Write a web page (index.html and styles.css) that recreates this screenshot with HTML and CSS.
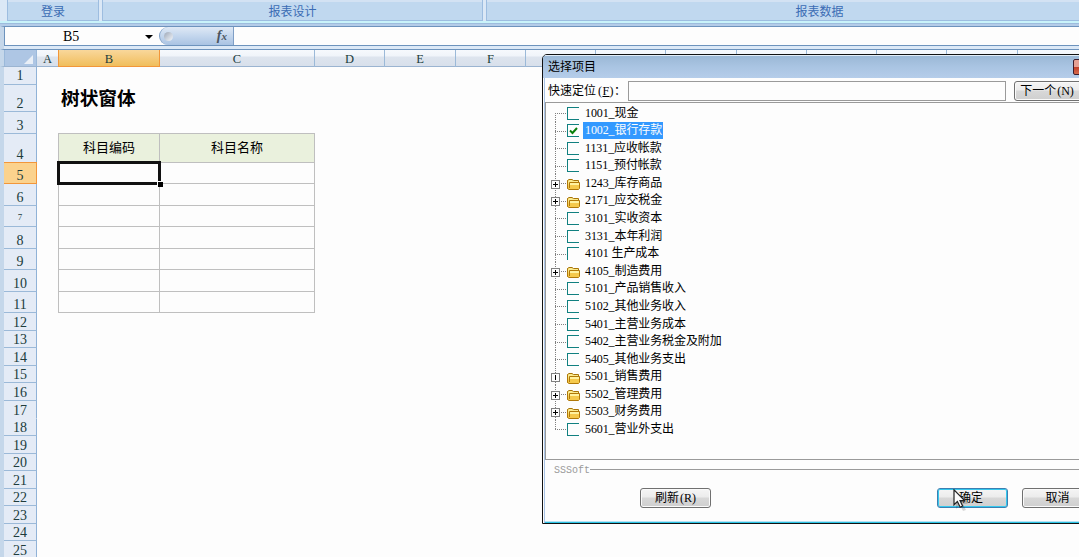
FILE: index.html
```html
<!DOCTYPE html>
<html lang="zh-CN">
<head>
  <meta charset="UTF-8">
  <title>树状窗体</title>
  <link rel="stylesheet" href="styles.css">
</head>
<body>

  <div class="ribbon">
    <div class="group login">登录</div>
    <div class="group design">报表设计</div>
    <div class="group data">报表数据</div>
  </div>

  <div class="formula-bar">
    <div class="name-box"><span>B5</span><i class="arrow"></i></div>
    <div class="fx"><i class="knob"></i><span>f<small>x</small></span></div>
    <div class="formula"></div>
  </div>

  <div class="col-heads" id="colHeads">
    <div class="corner"><svg width="9" height="9"><path d="M9 0V9H0Z" fill="#e9eff7"/></svg></div>
  </div>

  <div class="sheet">
    <div class="row-heads" id="rowHeads"></div>
    <div class="cells">
      <h1>树状窗体</h1>
      <div class="grid" id="grid">
        <div class="th">科目编码</div>
        <div class="th">科目名称</div>
      </div>
    </div>
  </div>

  <div class="selection"><i></i></div>

  <div class="dialog">
    <div class="title"><span>选择项目</span><i class="close"></i></div>
    <div class="search">
      <label for="find">快速定位<b>(<u>F</u>)：</b></label>
      <input type="text" id="find">
      <button class="next">下一个<b>(N)</b></button>
    </div>
    <div class="tree" id="tree"></div>
    <div class="brand"><span>SSSoft</span></div>
    <div class="buttons">
      <button class="refresh">刷新<b>(R)</b></button>
      <button class="ok">确定</button>
      <button class="cancel">取消</button>
    </div>
  </div>

  <svg class="cursor" width="16" height="22" viewBox="0 0 16 22">
    <path d="M3 3V20L7 16L10 22L13 21L10 15H15Z" fill="#000" opacity=".15"/>
    <path d="M1 .8V15.8L4.4 12.6L7.2 18.2L9.6 17L7 11.6H11.6Z" fill="#fdfdfd" stroke="#222" stroke-width="1.2"/>
  </svg>

  <script>
    const cols = [["A", 22], ["B", 101], ["C", 155], ["D", 70], ["E", 71], ["F", 70], ["", 70], ["", 70], ["", 71], ["", 70], ["", 70], ["", 70], ["", 71], ["", 70]];
    const rowEnds = [84, 111, 133, 162, 183, 205, 226, 248, 269, 291, 312, 330, 347, 365, 382, 400, 418, 435, 453, 470, 488, 505, 523, 540, 558];
    const items = [
      "1001_现金", "1002_银行存款", "1131_应收帐款", "1151_预付帐款", "+1243_库存商品",
      "+2171_应交税金", "3101_实收资本", "3131_本年利润", "4101 生产成本", "+4105_制造费用",
      "5101_产品销售收入", "5102_其他业务收入", "5401_主营业务成本", "5402_主营业务税金及附加",
      "5405_其他业务支出", "+5501_销售费用", "+5502_管理费用", "+5503_财务费用", "5601_营业外支出"
    ];
    const folder = '<svg class="folder" width="15" height="13" viewBox="0 0 15 13">' +
      '<path d="M1.5 10.5V2.5L3 1.5H6L7.5 2.5H12.5V5" fill="#fbeb8e" stroke="#a87408"/>' +
      '<path d="M1.5 2.5V10.5L3 11.5H12.5L13.5 10.5V4.5H3.5V10" fill="#f5c94c" stroke="#b07808"/>' +
      '<path d="M4 5H13V7H4Z" fill="#fff2a0"/></svg>';

    const colHeads = document.getElementById("colHeads");
    cols.forEach(function (c) {
      colHeads.insertAdjacentHTML("beforeend",
        `<div class="col ${c[0] === "B" ? "active" : ""}" style="width:${c[1]}px">${c[0]}</div>`);
    });

    const rowHeads = document.getElementById("rowHeads");
    let last = 66;
    rowEnds.forEach(function (end, i) {
      rowHeads.insertAdjacentHTML("beforeend",
        `<div class="row r${i + 1}" style="height:${end - last}px">${i + 1}</div>`);
      last = end;
    });

    // empty body cells of rows 5 - 11
    for (let i = 0; i < 14; i++) {
      document.getElementById("grid").insertAdjacentHTML("beforeend", "<div></div>");
    }

    const tree = document.getElementById("tree");
    const step = 17.58;
    items.forEach(function (item, i) {
      const h = Math.round((i + 1) * step) - Math.round(i * step);
      const parent = item[0] === "+";
      const icon = parent ? folder
        : `<span class="check">${i === 1 ? '<svg width="9" height="8"><path d="M1 3.5L3.5 6L8 1" fill="none" stroke="#0a800a" stroke-width="2"/></svg>' : ""}</span>`;
      tree.insertAdjacentHTML("beforeend",
        `<div class="node n${i + 1}" style="height:${h}px"><span class="line">${parent ? '<i class="toggle"></i>' : ""}</span>${icon}<span class="label">${item.replace("+", "")}</span></div>`);
    });
  </script>

</body>
</html>
```
FILE: styles.css
```css
* {
  box-sizing: border-box;
}

body {
  margin: 0;
  width: 1079px;
  height: 557px;
  overflow: hidden;
  background: #fdfdfd;
  font: 12px "Liberation Serif", "Noto Sans CJK SC", serif;
  color: #000;
}

b {
  font-weight: normal;
}

/* ribbon */
.ribbon {
  display: flex;
  gap: 3px;
  height: 26px;
  padding: 0 0 5px 7px;
  background: linear-gradient(#dbe8f6 0 21px, #c9f3fa 21px 23px, #9dbcdd 23px 24px, #b4cce8 24px);
}

.group {
  flex: none;
  height: 21px;
  padding-top: 4px;
  text-align: center;
  line-height: 17px;
  color: #3b6cb4;
  background: linear-gradient(#d3e2f3 0 2px, #c0d8ef 2px);
  border: 1px solid #9dbde0;
  border-top: 0;
}

.login {
  width: 92px;
}

.design {
  width: 381px;
}

.data {
  width: 667px;
}

/* formula bar */
.formula-bar {
  display: flex;
  height: 24px;
  border-top: 1px solid #6d93bd;
  border-bottom: 1px solid #6d93bd;
  border-left: 4px solid #c5d7ea;
  background: linear-gradient(#fdfdfd 0 18px, #6d93bd 18px 19px, #dce9f7 19px);
}

.name-box {
  display: flex;
  width: 155px;
  height: 18px;
  align-items: center;
  border-left: 1px solid #6d93bd;
  font: 14px/20px "Liberation Serif", serif;
}

.name-box span {
  flex: 1;
  padding: 2px 0 0 58px;
}

.arrow {
  margin: 2px 6px 0 0;
  border: 4px solid transparent;
  border-top-color: #000;
  border-bottom: 0;
}

.fx {
  display: flex;
  justify-content: space-between;
  align-items: center;
  width: 75px;
  height: 18px;
  padding: 0 6px 0 4px;
  background: linear-gradient(#dfe9f5, #c6d8ee 45%, #a9c3e3);
  border: 1px solid #7f9fc6;
  border-width: 0 1px 0 1px;
  border-radius: 9px 0 0 9px;
  font: italic bold 14px/16px "Liberation Serif", serif;
  color: #4c5560;
}

.fx small {
  font-size: 11px;
}

.knob {
  width: 9px;
  height: 9px;
  border-radius: 50%;
  background: linear-gradient(135deg, #9ca6b6, #c9d0da 50%, #f4f7fb);
}

/* headings */
.col-heads {
  display: flex;
  height: 17px;
  border-left: 4px solid #c5d7ea;
  border-bottom: 1px solid #9bb4d1;
  background: linear-gradient(#f6f9fd 0, #f0f4fa 6px, #dde4ee 7px, #d8e0eb);
}

.corner {
  flex: none;
  width: 33px;
  height: 16px;
  padding: 5px 0 0 19px;
  line-height: 0;
  background: #aec6e4;
  border: 1px solid #9bb9da;
  border-top: 0;
  border-bottom: 0;
}

.col {
  flex: none;
  height: 17px;
  border-right: 1px solid #9bb9d8;
  text-align: center;
  font-size: 12.5px;
  line-height: 19px;
  color: #203c3c;
}

.col.active {
  background: linear-gradient(#f9d79b, #f0be5c);
  border-right-color: #f2963a;
  border-bottom: 1px solid #f2963a;
  box-shadow: -1px 0 #f2963a;
}

.sheet {
  display: flex;
}

.row-heads {
  width: 37px;
  border-left: 4px solid #c5d7ea;
}

.row {
  display: flex;
  align-items: flex-end;
  justify-content: center;
  border-right: 1px solid #90b2d7;
  border-bottom: 1px solid #9bb9d8;
  background: #e4ebf6;
  font-size: 14px;
  line-height: 14px;
  color: #203c3c;
}

.r5 {
  background: #fbd28d;
  border-color: #f2963a;
  box-shadow: 0 -1px #f2963a;
}

.r7 {
  padding-bottom: 3px;
  font-size: 9px;
  line-height: 11px;
}

.r1 {
  padding-bottom: 1px;
}

.r17 {
  border-bottom-color: #e4ebf6;
}

/* worksheet */
.cells {
  padding: 17px 0 0 21px;
}

h1 {
  height: 49px;
  margin: 0;
  padding: 0 0 0 3px;
  font: bold 18.7px/26px "Noto Sans CJK SC", sans-serif;
}

.grid {
  display: grid;
  width: 257px;
  grid-template-columns: 101px 155px;
  grid-template-rows: 29px 21px 22px 21px 22px 21px 22px 21px;
  border-left: 1px solid #bfbfbf;
  border-top: 1px solid #bfbfbf;
}

.grid div {
  border-right: 1px solid #bfbfbf;
  border-bottom: 1px solid #bfbfbf;
}

.grid .th {
  background: #eaf1dd;
  text-align: center;
  font: 13px/25px "Noto Sans CJK SC", sans-serif;
}

.selection {
  position: absolute;
  left: 57px;
  top: 161px;
  width: 104px;
  height: 24px;
  border: 3px solid #111;
}

.selection i {
  position: absolute;
  right: -5px;
  bottom: -5px;
  width: 6px;
  height: 6px;
  background: #000;
  border: 1px solid #fdfdfd;
  border-width: 1px 0 0 1px;
}

/* dialog window */
.dialog {
  position: absolute;
  left: 542px;
  top: 54px;
  width: 560px;
  height: 470px;
  background: #fdfdfd;
  border: 1px solid #111;
  border-radius: 5px 0 0 0;
  box-shadow: inset 1px 0 #fdfdfd, inset 2px 0 #a9c4e6, inset 0 -1px #2cc4e4, inset 0 -2px #b8e2f4;
}

.title {
  display: flex;
  height: 23px;
  justify-content: space-between;
  padding: 3px 0 0 5px;
  line-height: 18px;
  background: linear-gradient(#e2edf8 0 1px, #9bb8d6 1px, #a9c4e2 50%, #b5cdea);
  border-radius: 4px 0 0 0;
}

.close {
  width: 28px;
  height: 16px;
  margin-top: 1px;
  background: linear-gradient(#e5a094 0 7px, #c23d27 7px, #d46a4c);
  border: 1px solid #3c1c2c;
  border-radius: 2px;
}

.search {
  display: flex;
  height: 24px;
  padding: 3px 0 0 5px;
}

.search label {
  width: 80px;
  line-height: 21px;
  white-space: nowrap;
}

.search label b {
  padding-left: 2px;
  letter-spacing: .4px;
}

.search input {
  width: 378px;
  height: 20px;
  margin-right: 8px;
  border: 1px solid #9a9a9a;
  background: #fdfdfd;
}

button {
  flex: none;
  width: 71px;
  height: 20px;
  padding: 0;
  font: inherit;
  line-height: 18px;
  color: #000;
  background: linear-gradient(#f5f5f5 0, #ececec 8px, #d8d8d8 9px, #cfcfcf);
  border: 1px solid #707070;
  border-radius: 3px;
  box-shadow: inset 0 0 0 1px #fafafa;
}

.search .next {
  width: 76px;
  padding-right: 10px;
}

button b {
  padding-left: 1px;
}

.tree {
  height: 358px;
  margin: 0 0 0 2px;
  padding: 1px 0 0 9px;
  border: 1px solid #9a9a9a;
}

.node {
  display: flex;
  align-items: center;
}

.line {
  display: flex;
  width: 12px;
  height: 100%;
  align-items: center;
  background:
    repeating-linear-gradient(#808080 0 1px, transparent 1px 2px) 0 0 / 1px 100% no-repeat,
    repeating-linear-gradient(90deg, #808080 0 1px, transparent 1px 2px) 0 9px / 12px 1px no-repeat;
}

.n1 .line {
  background-position: 0 9px, 0 9px;
}

.n16 .line {
  background-size: 1px 100%, 0 0;
}

.n19 .line {
  background-size: 1px 9px, 12px 1px;
}

.toggle {
  width: 9px;
  height: 9px;
  margin: 2px 0 0 -4px;
  border: 1px solid #808080;
  background:
    linear-gradient(#000, #000) center / 5px 1px no-repeat,
    linear-gradient(#000, #000) center / 1px 5px no-repeat,
    #fdfdfd;
}

.n16 .toggle {
  background:
    linear-gradient(#000, #000) center / 1px 5px no-repeat,
    #fdfdfd;
}

.check {
  width: 12px;
  height: 13px;
  padding: 2px 0 0 1px;
  border: 1px solid #108080;
  border-right: 0;
  line-height: 0;
}

.n9 .check {
  border-bottom: 0;
}

.folder {
  margin: 3px -2px 0 -1px;
}

.label {
  margin-left: 4px;
  padding: 0 1px 0 2px;
  line-height: 17px;
  letter-spacing: -.1px;
  white-space: nowrap;
}

.n2 .label {
  color: #fdfdfd;
  background: #3399ff;
}

.brand {
  display: flex;
  height: 20px;
  align-items: center;
  padding-left: 11px;
  font: 10px "Liberation Mono", monospace;
  color: #9a9a9a;
}

.brand::after {
  content: "";
  flex: 1;
  height: 1px;
  margin-bottom: 1px;
  background: #9a9a9a;
}

.buttons {
  display: flex;
  padding: 8px 0 0 97px;
}

.ok {
  margin: 0 14px 0 226px;
  padding-right: 3px;
  border-color: #3c7fb1;
  box-shadow: inset 0 0 0 1px #35c8ee;
}

.cursor {
  position: absolute;
  left: 953px;
  top: 489px;
}
```
